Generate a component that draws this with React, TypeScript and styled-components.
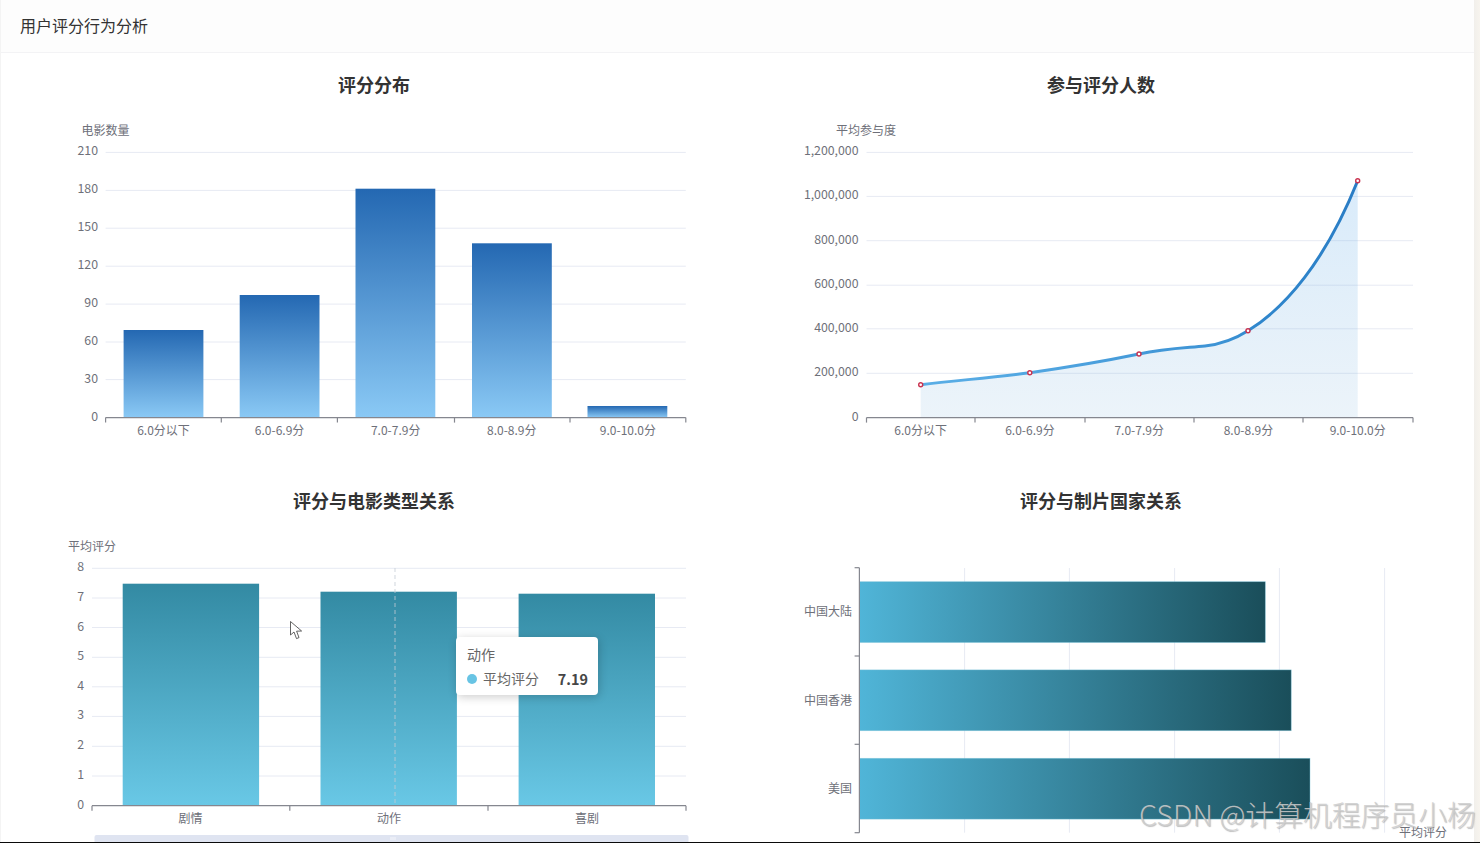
import React from 'react'
import styled, { createGlobalStyle } from 'styled-components'

const ratingLabels = ['6.0分以下', '6.0-6.9分', '7.0-7.9分', '8.0-8.9分', '9.0-10.0分']

const scoreBars = [
  { x: 123.6, top: 330 },
  { x: 239.7, top: 295 },
  { x: 355.5, top: 188.7 },
  { x: 472, top: 243.3 },
  { x: 587.5, top: 406 },
]
const scoreGrid = [
  { y: 152.4, label: '210' },
  { y: 190.4, label: '180' },
  { y: 228.2, label: '150' },
  { y: 266.2, label: '120' },
  { y: 304.1, label: '90' },
  { y: 342, label: '60' },
  { y: 379.6, label: '30' },
  { y: 417.6, label: '0' },
]
const scoreTicks = [105.6, 221.3, 337.4, 454.5, 570, 685.8]

const peopleGrid = [
  { y: 152.4, label: '1,200,000' },
  { y: 196.4, label: '1,000,000' },
  { y: 240.7, label: '800,000' },
  { y: 285.2, label: '600,000' },
  { y: 328.8, label: '400,000' },
  { y: 373.3, label: '200,000' },
  { y: 417.6, label: '0' },
]
const peopleTicks = [866.5, 975, 1085, 1194, 1303, 1413]
const peoplePoints = [
  { x: 920.7, y: 384.7 },
  { x: 1029.8, y: 372.7 },
  { x: 1139, y: 354 },
  { x: 1248, y: 330.7 },
  { x: 1357.7, y: 180.7 },
]
const peopleCurve =
  'M920.7 384.7 C960 380 990 378 1029.8 372.7 C1070 367 1105 361 1139 354 C1165 348.5 1185 348 1205 346 C1222 344 1235 339 1248 330.7 C1285 308 1325 262 1357.7 180.7'

const typeGrid = [
  { y: 568.3, label: '8' },
  { y: 598, label: '7' },
  { y: 627.5, label: '6' },
  { y: 657.3, label: '5' },
  { y: 686.8, label: '4' },
  { y: 716.4, label: '3' },
  { y: 746.3, label: '2' },
  { y: 776, label: '1' },
  { y: 805.7, label: '0' },
]
const typeTicks = [92, 289.8, 488, 686]
const typeBars = [
  { x: 122.7, top: 583.7, name: '剧情', labelX: 190.5 },
  { x: 320.5, top: 591.7, name: '动作', labelX: 389 },
  { x: 518.6, top: 593.7, name: '喜剧', labelX: 587 },
]

const countryBars = [
  { name: '中国大陆', top: 581.7, right: 1265.3, labelY: 611 },
  { name: '中国香港', top: 669.9, right: 1291.2, labelY: 700 },
  { name: '美国', top: 758.3, right: 1310, labelY: 788 },
]
const countryGrid = [964.6, 1069.4, 1174.6, 1279.4, 1384.6]
const countryTicks = [567.7, 656, 744.3, 832.7]
const countryValues = ['0', '2', '4', '6', '8', '10']

function ScoreChart() {
  return (
    <ChartSvg viewBox="10 105 727 364">
      <defs>
        <linearGradient id="scoreFill" x1="0" y1="0" x2="0" y2="1">
          <stop offset="0" stopColor="#2468b2" />
          <stop offset="1" stopColor="#8ac9f5" />
        </linearGradient>
      </defs>
      {scoreGrid.slice(0, -1).map((g) => (
        <GridLine key={g.y} x1={105.6} x2={685.8} y1={g.y} y2={g.y} />
      ))}
      {scoreBars.map((b) => (
        <rect
          key={b.x}
          x={b.x}
          y={b.top}
          width={79.8}
          height={417.6 - b.top}
          fill="url(#scoreFill)"
        />
      ))}
      <AxisLine x1={105.6} x2={685.8} y1={417.6} y2={417.6} />
      {scoreTicks.map((x) => (
        <AxisLine key={x} x1={x} x2={x} y1={417.6} y2={422.6} />
      ))}
      {scoreGrid.map((g) => (
        <ValueText key={g.y} x={98} y={g.y - 1} textAnchor="end">
          {g.label}
        </ValueText>
      ))}
      {ratingLabels.map((label, i) => (
        <AxisText key={label} x={163.5 + i * 116.1} y={430} textAnchor="middle">
          {label}
        </AxisText>
      ))}
      <AxisText x={105.5} y={130} textAnchor="middle">
        电影数量
      </AxisText>
    </ChartSvg>
  )
}

function PeopleChart() {
  return (
    <ChartSvg viewBox="737 105 727 364">
      <defs>
        <linearGradient
          id="peopleArea"
          gradientUnits="userSpaceOnUse"
          x1="0"
          y1="180"
          x2="0"
          y2="418"
        >
          <stop offset="0" stopColor="#6cb2ee" stopOpacity="0.26" />
          <stop offset="1" stopColor="#6ca9d8" stopOpacity="0.13" />
        </linearGradient>
        <linearGradient
          id="peopleLine"
          gradientUnits="userSpaceOnUse"
          x1="0"
          y1="180"
          x2="0"
          y2="385"
        >
          <stop offset="0" stopColor="#2a7cc4" />
          <stop offset="0.7" stopColor="#2f86cc" />
          <stop offset="1" stopColor="#5aaee6" />
        </linearGradient>
      </defs>
      {peopleGrid.slice(0, -1).map((g) => (
        <GridLine key={g.y} x1={866.5} x2={1413} y1={g.y} y2={g.y} />
      ))}
      <path d={`${peopleCurve} L1357.7 417 L920.7 417 Z`} fill="url(#peopleArea)" />
      <path d={peopleCurve} fill="none" stroke="url(#peopleLine)" strokeWidth={3} />
      {peoplePoints.map((p) => (
        <circle
          key={p.x}
          cx={p.x}
          cy={p.y}
          r={2}
          fill="#fff"
          stroke="#c9324f"
          strokeWidth={1.4}
        />
      ))}
      <AxisLine x1={866.5} x2={1413} y1={417.6} y2={417.6} />
      {peopleTicks.map((x) => (
        <AxisLine key={x} x1={x} x2={x} y1={417.6} y2={422.6} />
      ))}
      {peopleGrid.map((g) => (
        <ValueText key={g.y} x={858.5} y={g.y - 1} textAnchor="end">
          {g.label}
        </ValueText>
      ))}
      {ratingLabels.map((label, i) => (
        <AxisText key={label} x={920.7 + i * 109.25} y={430} textAnchor="middle">
          {label}
        </AxisText>
      ))}
      <AxisText x={866} y={130} textAnchor="middle">
        平均参与度
      </AxisText>
    </ChartSvg>
  )
}

function TypeChart() {
  return (
    <ChartSvg viewBox="10 521 727 364">
      <defs>
        <linearGradient id="typeFill" x1="0" y1="0" x2="0" y2="1">
          <stop offset="0" stopColor="#338aa3" />
          <stop offset="1" stopColor="#69c8e6" />
        </linearGradient>
      </defs>
      {typeGrid.slice(0, -1).map((g) => (
        <GridLine key={g.y} x1={92} x2={686} y1={g.y} y2={g.y} />
      ))}
      {typeBars.map((b) => (
        <rect
          key={b.x}
          x={b.x}
          y={b.top}
          width={136.4}
          height={805.7 - b.top}
          fill="url(#typeFill)"
        />
      ))}
      <line
        x1={395}
        x2={395}
        y1={568}
        y2={805}
        stroke="#c4ccd4"
        strokeOpacity={0.8}
        strokeDasharray="4 3"
      />
      <AxisLine x1={92} x2={686} y1={805.7} y2={805.7} />
      {typeTicks.map((x) => (
        <AxisLine key={x} x1={x} x2={x} y1={805.7} y2={810.7} />
      ))}
      {typeGrid.map((g) => (
        <ValueText key={g.y} x={84} y={g.y - 1} textAnchor="end">
          {g.label}
        </ValueText>
      ))}
      {typeBars.map((b) => (
        <AxisText key={b.name} x={b.labelX} y={818} textAnchor="middle">
          {b.name}
        </AxisText>
      ))}
      <AxisText x={92} y={546} textAnchor="middle">
        平均评分
      </AxisText>
      <rect x={94.5} y={835} width={594} height={10} rx={2} fill="#dfe4f1" />
      <path d="M391 837v3M393 837v3M395 837v3" stroke="#fff" strokeWidth={0.7} />
      {/* mouse pointer caught in the capture */}
      <path
        d="M290.5 621.5 L290.5 635 L294 632 L296.5 638.6 L299 637.6 L296.6 631.2 L301.6 631 Z"
        fill="#fff"
        stroke="#3c3c3c"
        strokeWidth={0.8}
      />
    </ChartSvg>
  )
}

function CountryChart() {
  return (
    <ChartSvg viewBox="737 521 727 364">
      <defs>
        <linearGradient id="countryFill" x1="0" y1="0" x2="1" y2="0">
          <stop offset="0" stopColor="#50b5d8" />
          <stop offset="1" stopColor="#1a4e5a" />
        </linearGradient>
      </defs>
      {countryGrid.map((x) => (
        <GridLine key={x} x1={x} x2={x} y1={568} y2={832.7} />
      ))}
      {countryBars.map((b) => (
        <rect
          key={b.name}
          x={859.4}
          y={b.top}
          width={b.right - 859.4}
          height={60.8}
          fill="url(#countryFill)"
          stroke="#7cc3d8"
          strokeOpacity={0.6}
          strokeWidth={0.7}
        />
      ))}
      <AxisLine x1={859.4} x2={859.4} y1={567.7} y2={832.7} />
      {countryTicks.map((y) => (
        <AxisLine key={y} x1={854.6} x2={859.4} y1={y} y2={y} />
      ))}
      {countryBars.map((b) => (
        <AxisText key={b.name} x={852} y={b.labelY} textAnchor="end">
          {b.name}
        </AxisText>
      ))}
      {countryValues.map((value, i) => (
        <AxisText key={value} x={859.4 + i * 105} y={846} textAnchor="middle">
          {value}
        </AxisText>
      ))}
      <AxisText x={1423} y={832} textAnchor="middle" fill="#555">
        平均评分
      </AxisText>
    </ChartSvg>
  )
}

export default function App() {
  return (
    <>
      <GlobalStyle />
      <Page>
        <Screen>
          <Main>
            <Header>用户评分行为分析</Header>
            <Grid>
              <Card>
                <Title>评分分布</Title>
                <ScoreChart />
              </Card>
              <Card>
                <Title>参与评分人数</Title>
                <PeopleChart />
              </Card>
              <Card>
                <Title>评分与电影类型关系</Title>
                <TypeChart />
                <Tooltip>
                  <TooltipName>动作</TooltipName>
                  <TooltipRow>
                    <TooltipDot />
                    <TooltipLabel>平均评分</TooltipLabel>
                    <TooltipValue>7.19</TooltipValue>
                  </TooltipRow>
                </Tooltip>
              </Card>
              <Card>
                <Title>评分与制片国家关系</Title>
                <CountryChart />
              </Card>
            </Grid>
          </Main>
          <ScrollEdge />
          <Watermark>CSDN @计算机程序员小杨</Watermark>
        </Screen>
        <BottomEdge />
      </Page>
    </>
  )
}

const GlobalStyle = createGlobalStyle`
  html, body {
    margin: 0;
    padding: 0;
    background: #ffffff;
    font-family: "Noto Sans CJK SC", "Noto Sans", sans-serif;
  }
  * {
    box-sizing: border-box;
  }
`

const Page = styled.div`
  width: 1480px;
  height: 843px;
  display: flex;
  flex-direction: column;
  overflow: hidden;
`

const Screen = styled.div`
  position: relative;
  flex: 1;
  min-height: 0;
  display: flex;
  overflow: hidden;
`

const BottomEdge = styled.div`
  height: 1.5px;
  background: #0a0a0a;
`

const Main = styled.main`
  flex: 1;
  min-width: 0;
  border-left: 1px solid #f4f4f4;
  background: #ffffff;
`

const ScrollEdge = styled.div`
  width: 6px;
  background: linear-gradient(to right, #f1efeb, #f7f4ee);
`

const Header = styled.header`
  height: 53px;
  padding: 0 19px 2px;
  display: flex;
  align-items: center;
  font-size: 16px;
  color: #333333;
  background: #fdfdfd;
  border-bottom: 1px solid #f3f3f5;
`

const Grid = styled.div`
  display: grid;
  grid-template-columns: 727px 727px;
  padding-left: 9px;
`

const Card = styled.section`
  position: relative;
  height: 416px;
`

const Title = styled.h3`
  margin: 0;
  height: 52px;
  padding: 13px 0 0 1px;
  line-height: 37px;
  text-align: center;
  font-size: 18px;
  font-weight: 700;
  color: #333333;
`

const ChartSvg = styled.svg`
  display: block;
  width: 727px;
  height: 364px;
  overflow: hidden;
`

const GridLine = styled.line`
  stroke: #e7eaf3;
  stroke-width: 1;
`

const AxisLine = styled.line`
  stroke: #85878f;
  stroke-width: 1.2;
`

const AxisText = styled.text`
  font-size: 12px;
  fill: #6e7079;
  dominant-baseline: central;
  transform: translateY(-1px);
`

const ValueText = styled(AxisText)`
  font-size: 12.3px;
`

const Tooltip = styled.div`
  position: absolute;
  left: 446px;
  top: 168px;
  width: 142px;
  height: 58px;
  padding: 8px 10px 8px 11px;
  background: #ffffff;
  border-radius: 4px;
  box-shadow: 1px 2px 10px rgba(0, 0, 0, 0.2);
  font-size: 14px;
  color: #666666;
`

const TooltipName = styled.div`
  line-height: 19px;
`

const TooltipRow = styled.div`
  margin-top: 5px;
  display: flex;
  align-items: center;
  line-height: 19px;
`

const TooltipDot = styled.span`
  width: 10px;
  height: 10px;
  margin-right: 6px;
  border-radius: 50%;
  background: #68c4e4;
`

const TooltipLabel = styled.span`
  flex: 1;
`

const TooltipValue = styled.span`
  font-size: 14.4px;
  font-weight: 700;
  color: #464646;
`

const Watermark = styled.div`
  position: absolute;
  left: 1139px;
  top: 794px;
  white-space: nowrap;
  font-size: 28.8px;
  line-height: 40px;
  font-weight: 300;
  color: rgba(205, 205, 205, 0.85);
  text-shadow: 1px 1px 1px rgba(110, 110, 110, 0.45);
  pointer-events: none;
`
